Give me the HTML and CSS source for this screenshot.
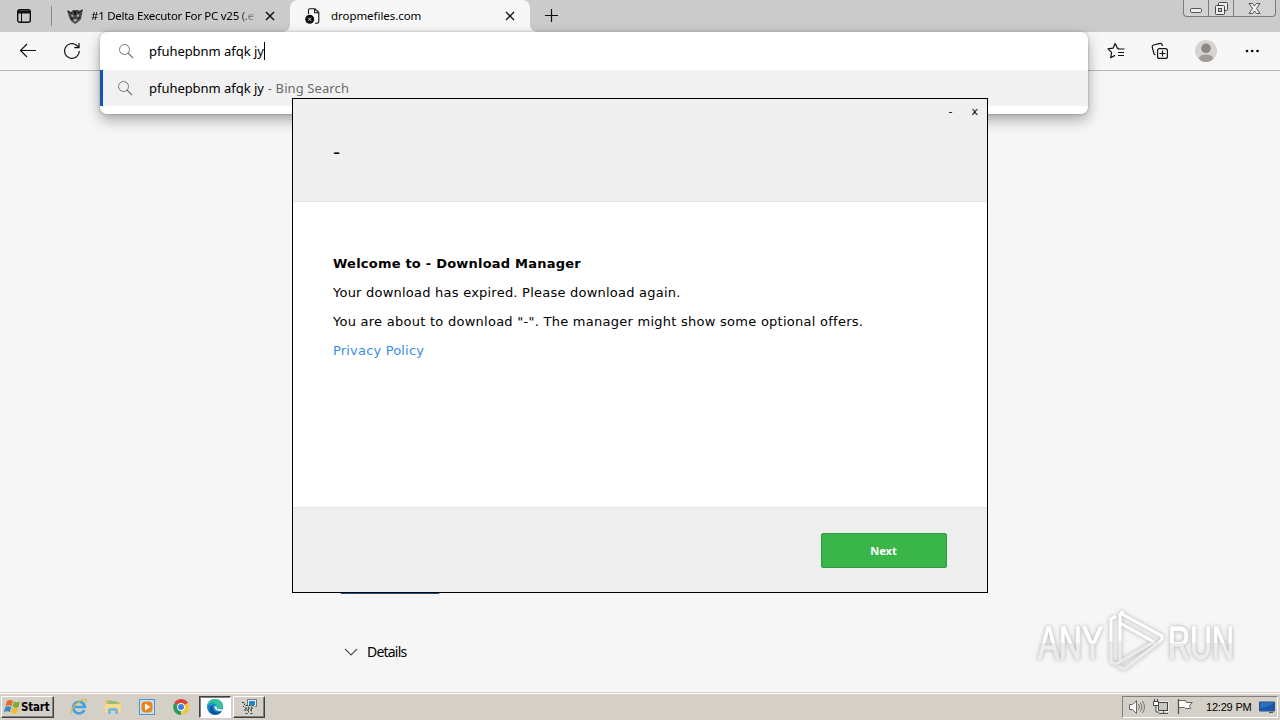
FILE: index.html
```html
<!DOCTYPE html>
<html lang="en">
<head>
<meta charset="UTF-8">
<title>dropmefiles.com</title>
<link rel="stylesheet" href="styles.css">
</head>
<body>
<div class="desktop">
    <div class="tabbar">
        <div class="tab-menu">
            <svg width="16" height="16" viewBox="0 0 16 16"><rect x="1.7" y="1.7" width="12.6" height="12.6" rx="2" fill="none" stroke="#111" stroke-width="1.4"/><path d="M2 2.5h12v3H2z" fill="#111"/><path d="M5.5 5v9" stroke="#111"/></svg>
        </div>
        <div class="tab">
            <svg class="favicon" width="16" height="16" viewBox="0 0 16 16"><path d="M0 2l4 2 2-2h5l2 1 3-2-1 5-1 5-3 3-3 2-4-3-2-4z" fill="#484848"/><path d="M4 6l3 2-2 1zM12 6L9 8l3 1zM6 12l2-1 3 1-3 2z" fill="#aaa"/><path d="M1 3l4 3M15 2l-4 3M7 3l1 4 1-4M3 10l3 1M13 9l-2 2" stroke="#111" fill="none"/></svg>
            <span class="tab-title fade">#1 Delta Executor For PC v25 (.e</span>
            <svg class="tab-close" width="10" height="10" viewBox="0 0 10 10"><path d="M1 1l8 8M9 1L1 9" stroke="#111" stroke-width="1.5"/></svg>
        </div>
        <div class="tab active">
            <svg class="favicon" width="16" height="16" viewBox="0 0 16 16"><path d="M3.5 6V2.3Q3.5 .8 5 .8h5l3.8 3.800v8.900q0 1.700-1.700 1.700H10M9.700 1v3.800h4" fill="none" stroke="#111" stroke-width="1.100"/><circle cx="4.700" cy="11.300" r="4.500" fill="#111"/><path d="M3.200 9.800l3 3M6.200 9.800l-3 3" stroke="#ddd"/></svg>
            <span class="tab-title">dropmefiles.com</span>
            <svg class="tab-close" width="10" height="10" viewBox="0 0 10 10"><path d="M1 1l8 8M9 1L1 9" stroke="#111" stroke-width="1.3"/></svg>
        </div>
        <svg class="new-tab" width="15" height="15" viewBox="0 0 15 15"><path d="M7.500 1v13M1 7.500h13" stroke="#111" stroke-width="1.2"/></svg>
        <div class="window-buttons">
            <span class="wb min"><svg width="12" height="5" viewBox="0 0 12 5"><rect x=".5" y=".5" width="11" height="4" rx="1.2" fill="#eee" stroke="#555"/></svg></span>
            <span class="wb max"><svg width="13" height="13" viewBox="0 0 13 13"><rect x="3.5" y=".5" width="9" height="8" rx="1" fill="#eee" stroke="#444"/><rect x=".5" y="3.5" width="9" height="9" rx="1" fill="#eee" stroke="#444"/><rect x="3.5" y="6.5" width="3" height="3" fill="#ccc" stroke="#444"/></svg></span>
            <span class="wb close"><svg width="13" height="11" viewBox="0 0 13 11"><path d="M1 .5h3.500l2 2.500 2-2.500H12L8.500 5.500 12 10.500H8.500L6.500 8l-2 2.500H1l3.500-5z" fill="#eee" stroke="#555"/></svg></span>
        </div>
    </div>

    <div class="toolbar">
        <svg class="back" width="18" height="16" viewBox="0 0 18 16"><path d="M8 1L1.500 7.500 8 14M1.500 7.500H17" fill="none" stroke="#111" stroke-width="1.2"/></svg>
        <svg class="reload" width="18" height="18" viewBox="0 0 18 18"><path d="M16.300 9A7.400 7.400 0 1 1 13.500 3.200L16 5.500M16 1v4.700h-4.700" fill="none" stroke="#111" stroke-width="1.2"/></svg>
        <div class="toolbar-right">
            <svg width="18" height="18" viewBox="0 0 18 18"><path d="M10.500 7h7M11 10.500h6M11 13.500h6" stroke="#111" stroke-width="1.2"/><path d="M12 6.500l-1.600-.3L8.200 1.500 6 6.200l-5 .7 3.600 3.500-.9 5.300L8 13.400" fill="none" stroke="#111" stroke-width="1.2" stroke-linejoin="round"/></svg>
            <svg width="18" height="18" viewBox="0 0 18 18"><rect x="6.600" y="6.600" width="9.800" height="9.800" rx="2" fill="none" stroke="#111" stroke-width="1.2"/><path d="M11.500 8.500v6M8.500 11.500h6M4.500 13L3 12 1.200 5Q1 3.500 2.500 3L9 1.300q1.500-.2 2 1.200l.5 1.500" fill="none" stroke="#111" stroke-width="1.2"/></svg>
            <svg width="22" height="22" viewBox="0 0 22 22"><circle cx="11" cy="11" r="11" fill="#d6d4d2"/><circle cx="11" cy="8.300" r="4.800" fill="#8b8785"/><path d="M3.700 18.500Q5 14.500 11 14.500t7.300 4Q15.500 22 11 22t-7.300-3.500z" fill="#a09c99"/></svg>
            <svg width="14" height="4" viewBox="0 0 14 4"><circle cx="2" cy="2" r="1.3"/><circle cx="7.200" cy="2" r="1.3"/><circle cx="12.500" cy="2" r="1.3"/></svg>
        </div>
    </div>

    <div class="page">
        <div class="page-button"></div>
        <div class="details">
            <svg width="14" height="8" viewBox="0 0 14 8"><path d="M1 1l6 6 6-6" fill="none" stroke="#555" stroke-width="1.2"/></svg>
            <span>Details</span>
        </div>
    </div>

    <div class="taskbar">
        <div class="start">
            <svg width="17" height="16" viewBox="0 0 17 16"><path d="M3 2q3-2 6 0L7.500 7q-3-1.500-6 0z" fill="#e8672b"/><path d="M10 2.500q3 1.500 6 0L14.500 8q-3 1.500-6-.3z" fill="#79ad38"/><path d="M1.300 8q3-1.500 6 0L6 13q-3-1.500-6 0z" fill="#3b87c9"/><path d="M8.300 8.700q3 1.500 6 0L13 14q-3 1.500-6-.5z" fill="#f2bc2c"/></svg>
            <span>Start</span>
        </div>
        <div class="quick">
            <svg width="18" height="18" viewBox="0 0 18 18"><path d="M14.300 12A5.800 5.800 0 1 1 14.800 9H4.500" fill="none" stroke="#43a5df" stroke-width="2.7"/><path d="M2 15C-1 14 4 7 10 3q5-3 6-1.500.6 1-.4 3" fill="none" stroke="#e1b83c" stroke-width="1.2"/></svg>
            <svg width="18" height="18" viewBox="0 0 18 18"><path d="M2 2h6l1 2h7v9H2z" fill="#dfba58"/><path d="M4 3h9v4H4z" fill="#8fbf80"/><path d="M1 6h16v8H1z" fill="#f4dc8a"/><path d="M4 16v-4q0-2 2-2h6q2 0 2 2v4h-3v-3H7v3z" fill="#78b9de"/></svg>
            <svg width="18" height="18" viewBox="0 0 18 18"><rect x="1.500" y="1.500" width="15" height="15" fill="#c8e0f2" stroke="#4b96cb"/><rect x="3.500" y="3.500" width="11" height="11" rx="4" fill="#ed8217"/><path d="M7 5.500v7L12.500 9z" fill="#fff"/></svg>
            <svg width="18" height="18" viewBox="0 0 18 18"><path d="M9 9L2.200 5A8 8 0 0 1 16 5z" fill="#dc4437"/><path d="M9 9v8A8 8 0 0 1 2.200 5z" fill="#2c9d50"/><path d="M9 9l7-4a8 8 0 0 1-7 12l3.500-6z" fill="#f7c72d"/><circle cx="9" cy="9" r="3.900" fill="#fff"/><circle cx="9" cy="9" r="3" fill="#3f7fe8"/></svg>
        </div>
        <div class="task pressed">
            <svg width="18" height="18" viewBox="0 0 18 18"><circle cx="9" cy="9" r="8" fill="#1683cb"/><path d="M1 8C2 2 7 .5 10 1c5 .7 8 5 6.700 8-1.200 2.500-5 2.500-6 1 1.500-4-5-6-9.700-2z" fill="#35c49b"/><path d="M1.200 8Q4 3.500 9 4.500L6 7q-4-1-4.800 1z" fill="#1d9fd6"/><path d="M7 8c-2 4 3 8 8.500 5.500C12 18 6 18 4 13 3 10 5 8 7 8z" fill="#105595"/><path d="M8.500 8q3 0 2 2.300.7 1.500 5.200.7l.8 1.500c-5 1.500-8.500-1-8-4.500z" fill="#fff"/></svg>
        </div>
        <div class="task">
            <svg width="18" height="18" viewBox="0 0 18 18"><rect x="7.500" y="1.500" width="9" height="7" fill="#eee" stroke="#777"/><path d="M9 3h6v4H9z" fill="#198cd0"/><path d="M1.500 4.500l3-.5 2 3.500H15l-2.500 8h-7L3.500 10z" fill="#d2d2cc"/><path d="M2 4.500h2l1 3h9M3 8l2 2h8M4 12h8M5.500 15.500h2M10.500 15.500h2" fill="none" stroke="#333" stroke-dasharray="2 1"/><path d="M8.500 8.500v6M11.500 8.500v5M6 10v3" stroke="#47645f"/></svg>
        </div>
        <div class="tray">
            <svg width="18" height="18" viewBox="0 0 18 18"><path d="M1.500 6.500h3l4-4v13l-4-4h-3z" fill="#fff" stroke="#666"/><path d="M10.500 6q2 3 0 6M12.500 4.500q3 4.500 0 9M14.500 3q4 6 0 12" fill="none" stroke="#777"/></svg>
            <svg width="18" height="18" viewBox="0 0 18 18"><rect x="6.500" y="4.500" width="9" height="8" fill="#c7c7c3" stroke="#444"/><path d="M5.500 3.500h11v10h-11z" fill="none" stroke="#fff" stroke-width=".6"/><path d="M7 15.500h9M11.500 13v2" stroke="#555"/><path d="M2.500 1v3M5.500 1v3M1.500 3.500h5v4h-5zM4 8v6h3" fill="#fff" stroke="#444"/></svg>
            <svg width="18" height="18" viewBox="0 0 18 18"><path d="M2.500 2.500h7l1 2h6l-3 3 1 3h-5l-1-1h-6z" fill="#fff" stroke="#666"/><path d="M2.500 1v15" stroke="#555" stroke-width="1.3"/></svg>
            <span class="clock">12:29 PM</span>
            <svg class="screen" width="16" height="14" viewBox="0 0 16 14"><path d="M.5 2h15v9H.5z" fill="#2e70bd" stroke="#244f85"/><path d="M1 8q7 0 14-5v7H1z" fill="#1955a8"/><path d="M10 12.500h4" stroke="#555"/></svg>
        </div>
    </div>

    <div class="omnibox">
        <div class="omni-row input">
            <svg width="16" height="16" viewBox="0 0 16 16"><circle cx="6.500" cy="6.500" r="5" fill="none" stroke="#777"/><path d="M10 10l5 5" stroke="#777" stroke-width="1.2"/></svg>
            <span class="query">pfuhepbnm afqk jy</span><span class="caret"></span>
        </div>
        <div class="omni-row suggestion">
            <svg width="16" height="16" viewBox="0 0 16 16"><circle cx="6.500" cy="6.500" r="5" fill="none" stroke="#777"/><path d="M10 10l5 5" stroke="#777" stroke-width="1.2"/></svg>
            <span class="query">pfuhepbnm afqk jy</span><span class="engine">- Bing Search</span>
        </div>
    </div>

    <div class="dialog">
        <div class="dialog-head">
            <div class="dialog-controls"><span>-</span><span>x</span></div>
            <div class="dialog-title">-</div>
        </div>
        <div class="dialog-body">
            <p class="welcome">Welcome to - Download Manager</p>
            <p class="expired">Your download has expired. Please download again.</p>
            <p class="about">You are about to download "-". The manager might show some optional offers.</p>
            <p class="privacy">Privacy Policy</p>
        </div>
        <div class="dialog-foot">
            <div class="next">Next</div>
        </div>
    </div>

    <svg class="watermark" width="230" height="76" viewBox="0 0 230 76">
        <defs>
            <linearGradient id="fade" x1="0" y1="0" x2="0" y2="1"><stop offset=".5" stop-color="#fff"/><stop offset=".52" stop-color="#ececec"/></linearGradient>
        </defs>
        <text x="8" y="51" textLength="65" lengthAdjust="spacingAndGlyphs">ANY</text>
        <text x="138" y="51" textLength="66" lengthAdjust="spacingAndGlyphs">RUN</text>
        <path d="M86 8L81 11v43l6 3M90 5v47M90 5l42 23v4M90 15l34 19-38 22M132 32L94 61l-6-3M90 5l4-1" fill="none" stroke="url(#fade)" stroke-width="3" stroke-linejoin="round"/>
    </svg>
</div>
</body>
</html>
```
FILE: styles.css
```css
body {
    margin: 0;
    font-family: "Noto Sans", sans-serif;
    color: #000;
}

.desktop {
    position: relative;
    width: 1280px;
    height: 720px;
    overflow: hidden;
    display: flex;
    flex-direction: column;
    background: #f6f6f6;
}
svg {
    display: block;
    flex: none;
}
span, p {
    white-space: nowrap;
}

/* tabs */
.tabbar {
    height: 32px;
    display: flex;
    background: #cbcbcb;
    flex: none;
}
.tab-menu {
    width: 35px;
    padding: 2px 0 2px 16px;
    height: 16px;
    margin-top: 6px;
    border-right: 1px solid #888;
}
.tab {
    width: 223px;
    height: 32px;
    display: flex;
    align-items: center;
    padding-left: 15px;
    box-sizing: border-box;
}
.tab.active {
    position: relative;
    width: 240px;
    margin-left: 15px;
    background: #f7f7f7;
    border-radius: 8px 8px 0 0;
}
.tab.active::before, .tab.active::after {
    content: "";
    position: absolute;
    bottom: 0;
    width: 7px;
    height: 7px;
}
.tab.active::before {
    left: -7px;
    background: radial-gradient(circle at 0 0, transparent 6.5px, #f7f7f7 7px);
}
.tab.active::after {
    right: -7px;
    background: radial-gradient(circle at 100% 0, transparent 6.5px, #f7f7f7 7px);
}
.tab-title {
    margin-left: 9px;
    width: 170px;
    font-size: 11.5px;
    line-height: 18px;
}
.tab.active .tab-title {
    margin-left: 10px;
    width: 174px;
    letter-spacing: -0.05px;
}
.tab .fade {
    margin-left: 8px;
    letter-spacing: -0.27px;
    -webkit-mask-image: linear-gradient(90deg, #000 88%, transparent);
    mask-image: linear-gradient(90deg, #000 88%, transparent);
}
.tab-close {
    margin-left: 7px;
}
.tab.active .tab-close {
    margin-left: 0;
}
.new-tab {
    margin: 8px 0 0 14px;
}
.window-buttons {
    display: flex;
    margin-left: auto;
    margin-right: 4px;
    height: 16px;
    border: 1px solid #7d7d7d;
    border-top: 0;
    border-radius: 0 0 4px 4px;
    background: #d2d2d2;
}
.wb {
    display: flex;
    justify-content: center;
    align-items: center;
    width: 24px;
    border-right: 1px solid #7d7d7d;
}
.wb.min svg {
    margin-top: 5px;
}
.wb.close {
    width: 41px;
    border: 0;
}

/* address row */
.toolbar {
    height: 38px;
    display: flex;
    align-items: center;
    background: #f7f7f7;
    border-bottom: 1px solid #b9b9b9;
    flex: none;
}
.back {
    margin-left: 19px;
}
.reload {
    margin-left: 26px;
}
.toolbar-right {
    display: flex;
    align-items: center;
    margin-left: auto;
    margin-right: 21px;
    gap: 26px;
}
.toolbar-right svg:nth-child(4) {
    margin-left: 2px;
}

/* page behind the dialog */
.page {
    flex: 1;
    padding: 498px 0 0 340px;
}
.page-button {
    width: 100px;
    height: 25px;
    border-radius: 2px;
    background: #0f5291;
    margin-bottom: 47px;
}
.details {
    display: flex;
    align-items: center;
    gap: 9px;
    margin-left: 4px;
    font-size: 14px;
    line-height: 22px;
    letter-spacing: -0.8px;
}

/* omnibox dropdown */
.omnibox {
    position: absolute;
    left: 100px;
    top: 32px;
    width: 988px;
    height: 82px;
    background: #fff;
    border-radius: 7px;
    box-shadow: 0 6px 14px rgba(0, 0, 0, .32), 0 0 3px rgba(0, 0, 0, .25);
}
.omni-row {
    display: flex;
    align-items: center;
    height: 38px;
    padding-left: 18px;
    font-size: 13px;
}
.omni-row .query {
    margin-left: 15px;
    letter-spacing: -0.04px;
}
.suggestion {
    height: 36px;
    padding-left: 14px;
    border-left: 3px solid #1553b5;
    background: #f1f1f1;
}
.suggestion .query {
    margin-left: 16px;
}
.caret {
    width: 1px;
    height: 18px;
    background: #000;
}
.engine {
    color: #6b6b6b;
    margin-left: 4px;
    letter-spacing: 0.1px;
}

/* download manager window */
.dialog {
    position: absolute;
    left: 292px;
    top: 98px;
    width: 694px;
    height: 493px;
    border: 1px solid #000;
    background: #fff;
    display: flex;
    flex-direction: column;
    font-family: "DejaVu Sans", sans-serif;
}
.dialog-head {
    height: 102px;
    background: #efefef;
    border-bottom: 1px solid #e2e2e2;
}
.dialog-controls {
    display: flex;
    justify-content: flex-end;
    gap: 19px;
    padding: 5px 9px 0 0;
    font-size: 11px;
    line-height: 15px;
}
.dialog-title {
    padding: 21px 0 0 40px;
    font-size: 20px;
    line-height: 24px;
}
.dialog-body {
    flex: 1;
    padding: 47px 40px 0;
    font-size: 13px;
}
.dialog-body p {
    margin: 0;
    line-height: 29px;
}
.welcome {
    font-weight: bold;
    letter-spacing: 0.22px;
}
.expired {
    letter-spacing: 0.23px;
}
.about {
    letter-spacing: 0.26px;
}
.privacy {
    color: #3a8ee6;
    letter-spacing: 0.18px;
}
.dialog-foot {
    height: 84px;
    display: flex;
    justify-content: flex-end;
    align-items: center;
    padding-right: 40px;
    background: #eee;
    border-top: 1px solid #e6e6e6;
}
.next {
    width: 124px;
    height: 33px;
    margin-top: 1px;
    border: 1px solid #2f9a41;
    border-radius: 2px;
    background: #39b54a;
    color: #fff;
    font: bold 11px/34px "Noto Sans", sans-serif;
    text-align: center;
    text-indent: -1px;
}

/* taskbar */
.taskbar {
    height: 26px;
    display: flex;
    align-items: center;
    flex: none;
    border-top: 1px solid #fff;
    box-shadow: 0 -1px #d4d0c8;
    background: #d4d0c8;
    padding: 0 1px;
}
.start, .task {
    box-sizing: border-box;
    height: 22px;
    display: flex;
    align-items: center;
    border: 1px solid;
    border-color: #fff #404040 #404040 #fff;
    box-shadow: inset -1px -1px #808080;
}
.start {
    width: 53px;
    padding-left: 2px;
    font: bold 11.5px "DejaVu Sans Condensed", sans-serif;
    letter-spacing: -0.2px;
}
.quick {
    display: flex;
    gap: 16px;
    margin: 0 9px 0 16px;
}
.task {
    width: 32px;
    justify-content: center;
    margin-left: 2px;
}
.task.pressed {
    margin-left: 0;
    background: #fff;
    border-color: #404040 #fff #fff #404040;
    box-shadow: inset 1px 1px #808080;
}
.tray {
    box-sizing: border-box;
    display: flex;
    align-items: center;
    height: 22px;
    width: 156px;
    margin-left: auto;
    margin-right: 1px;
    border: 1px solid;
    border-color: #808080 #fff #fff #808080;
    padding-left: 5px;
    gap: 6px;
}
.clock {
    font: 11px "Liberation Sans", sans-serif;
    letter-spacing: -0.2px;
    margin-left: 6px;
}
.screen {
    margin-left: 2px;
}

.watermark {
    position: absolute;
    left: 1030px;
    top: 608px;
    filter: drop-shadow(0 0 2px rgba(0, 0, 0, .3));
}
.watermark text {
    font: 47px "Liberation Sans", sans-serif;
    fill: url(#fade);
    stroke: url(#fade);
    stroke-width: 1px;
}
```
